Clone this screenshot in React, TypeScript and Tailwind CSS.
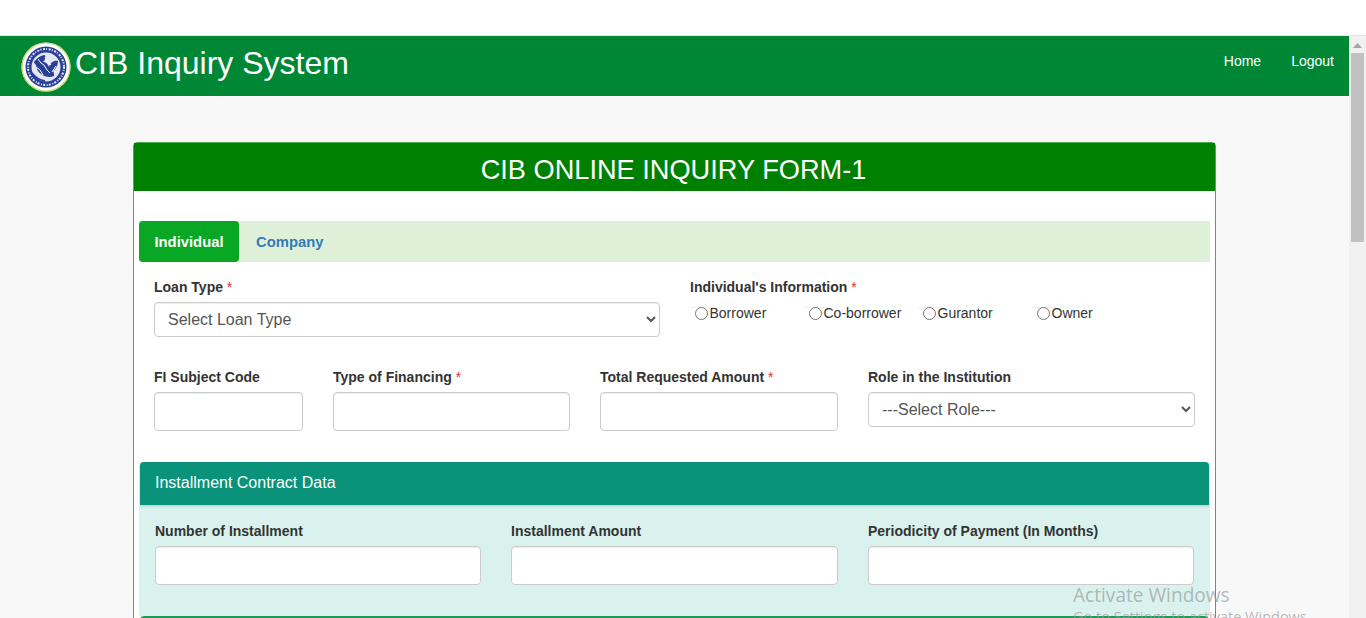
import React from "react";

function Logo() {
  return (
    <svg width="50" height="50" viewBox="0 0 50 50" className="mt-[2px] shrink-0">
      <circle cx="25" cy="25" r="24.5" fill="#ffffff" />
      <circle cx="25" cy="25" r="24" fill="none" stroke="#c3d96b" strokeWidth="1.2" />
      <circle cx="25" cy="25" r="20.5" fill="#2a3f97" />
      <circle cx="25" cy="25" r="18" fill="none" stroke="#e6e9f5" strokeWidth="2" strokeDasharray="2 1.2 1 1.6" />
      <circle cx="25" cy="25" r="14.5" fill="#e4e8f4" />
      <path
        d="M13 20c3-4 7-7 11-7 1 3 0 5-2 7 3 0 5 2 6 5 1-4 5-7 9-6 0 4-2 8-5 10 1 1 1 3 1 5-4 2-9 1-13-2-3-2-5-6-5-9-1-1-2-2-2-3z"
        fill="#2a3f97"
      />
      <path d="M17 17l3 4 3 2 3 5 3 3M24 15l3 5 3 3M15 25l4 3 3 5M31 30l4-6" stroke="#ffffff" strokeWidth="1" fill="none" />
      <path d="M11 31c3 4 7 7 13 8" stroke="#2a3f97" strokeWidth="1.6" fill="none" />
    </svg>
  );
}

function Label({ text, required }: { text: string; required?: boolean }) {
  return (
    <label className="mb-[5px] block h-5 text-[14px] font-bold leading-5 text-[#333333]">
      {text}
      {required && <span className="font-normal text-[#e52b2b]"> *</span>}
    </label>
  );
}

function TextBox() {
  return (
    <input
      type="text"
      className="block h-[39px] w-full rounded-[4px] border border-[#cccccc] bg-white px-3 text-[14px] shadow-[inset_0_1px_1px_rgba(0,0,0,0.075)]"
    />
  );
}

function SelectBox({ value }: { value: string }) {
  return (
    <select
      defaultValue={value}
      className="block h-[35px] w-full rounded-[4px] border border-[#cccccc] bg-white pl-[9px] pr-3 text-[16px] text-[#555555] shadow-[inset_0_1px_1px_rgba(0,0,0,0.075)]"
    >
      <option>{value}</option>
    </select>
  );
}

function Radio({ text }: { text: string }) {
  return (
    <label className="relative flex w-[114px] items-center text-[14px] leading-5 text-[#333333]">
      <span className="absolute left-0 top-[4px] h-px w-6 bg-[#eeeeee]" />
      <span className="relative flex h-5 w-[18px] shrink-0 items-center justify-end">
        <input type="radio" name="info" className="m-0 h-[13px] w-[13px]" />
      </span>
      <span className="ml-[1.5px]">{text}</span>
    </label>
  );
}

export default function App() {
  return (
    <div
      className="relative h-[618px] w-[1366px] overflow-hidden bg-white"
      style={{ fontFamily: '"Liberation Sans", Arial, sans-serif' }}
    >
      <div className="h-[35px]" />
      <div className="flex h-[583px] border-t border-[#e7e7e7]">
        <main className="min-w-0 flex-1 overflow-hidden bg-[#f8f8f8]">
          {/* navbar */}
          <nav className="flex h-[60px] items-center bg-[#008736] pl-[21px] pr-[15px] text-white">
            <Logo />
            <span className="mb-[6px] ml-[4px] text-[32px] leading-none">CIB Inquiry System</span>
            <div className="ml-auto flex gap-[30px] pb-[10px] text-[14px]">
              <a>Home</a>
              <a>Logout</a>
            </div>
          </nav>

          {/* card */}
          <div className="ml-[133px] mt-[46px] w-[1083px] rounded-t-[4px] border border-[#4ea84e] bg-white">
            <h1 className="flex h-[48px] items-center justify-center bg-[#008000] pr-[2px] pt-[6px] text-[27.2px] font-normal text-white">
              CIB ONLINE INQUIRY FORM-1
            </h1>

            <div className="px-[5px] pt-[30px]">
              {/* tabs */}
              <div className="flex h-[41px] items-center bg-[#dff0d8] text-[14.8px] font-bold">
                <div className="flex h-full w-[100px] items-center justify-center rounded-[4px] bg-[#08a825] pt-[2px] text-white">
                  Individual
                </div>
                <div className="ml-[17px] pt-[2px] text-[#337ab7]">Company</div>
              </div>

              {/* first row */}
              <div className="mt-[15px] flex pl-[15px] pr-[15px]">
                <div className="w-[506px]">
                  <Label text="Loan Type" required />
                  <SelectBox value="Select Loan Type" />
                </div>
                <div className="ml-[30px]">
                  <Label text="Individual's Information" required />
                  <div className="mt-[6px] flex">
                    <Radio text="Borrower" />
                    <Radio text="Co-borrower" />
                    <Radio text="Gurantor" />
                    <Radio text="Owner" />
                  </div>
                </div>
              </div>

              {/* second row */}
              <div className="mt-[30px] flex gap-[30px] pl-[15px] pr-[15px]">
                <div className="w-[149px]">
                  <Label text="FI Subject Code" />
                  <TextBox />
                </div>
                <div className="w-[237px]">
                  <Label text="Type of Financing" required />
                  <TextBox />
                </div>
                <div className="w-[238px]">
                  <Label text="Total Requested Amount" required />
                  <TextBox />
                </div>
                <div className="w-[327px]">
                  <Label text="Role in the Institution" />
                  <SelectBox value="---Select Role---" />
                </div>
              </div>

              {/* installment panel */}
              <div className="mt-[31px] bg-[#daf2ee]">
                <div className="mx-px flex h-[43px] items-center rounded-t-[4px] bg-[#0a927b] pb-[2px] pl-[15px] text-[16px] text-white shadow-[0_2px_2px_rgba(0,0,0,0.1)]">
                  Installment Contract Data
                </div>
                <div className="grid h-[111px] grid-cols-[326px_327px_326px] gap-[30px] pl-[16px] pt-[16px]">
                  <div>
                    <Label text="Number of Installment" />
                    <TextBox />
                  </div>
                  <div>
                    <Label text="Installment Amount" />
                    <TextBox />
                  </div>
                  <div>
                    <Label text="Periodicity of Payment (In Months)" />
                    <TextBox />
                  </div>
                </div>
              </div>
              <div className="mx-px h-10 rounded-t-[4px] bg-[#1e9a58]" />
            </div>
          </div>
        </main>

        {/* scrollbar */}
        <div className="flex w-[17px] shrink-0 flex-col items-center bg-[#f1f1f1]">
          <svg width="9" height="5" viewBox="0 0 9 5" className="mt-[7px]">
            <path d="M4.5 0L9 5H0z" fill="#a3a3a3" />
          </svg>
          <div className="mt-[5px] h-[189px] w-[13px] bg-[#c1c1c1]" />
        </div>
      </div>

      {/* activation watermark */}
      <div
        className="pointer-events-none absolute left-[1073px] top-[583px] whitespace-nowrap text-[#9a9a9a]/70"
        style={{ fontFamily: '"Open Sans", "Noto Sans", sans-serif' }}
      >
        <div className="text-[19.1px] leading-[24px]">Activate Windows</div>
        <div className="text-[14.5px] leading-[20px]">Go to Settings to activate Windows.</div>
      </div>
    </div>
  );
}
